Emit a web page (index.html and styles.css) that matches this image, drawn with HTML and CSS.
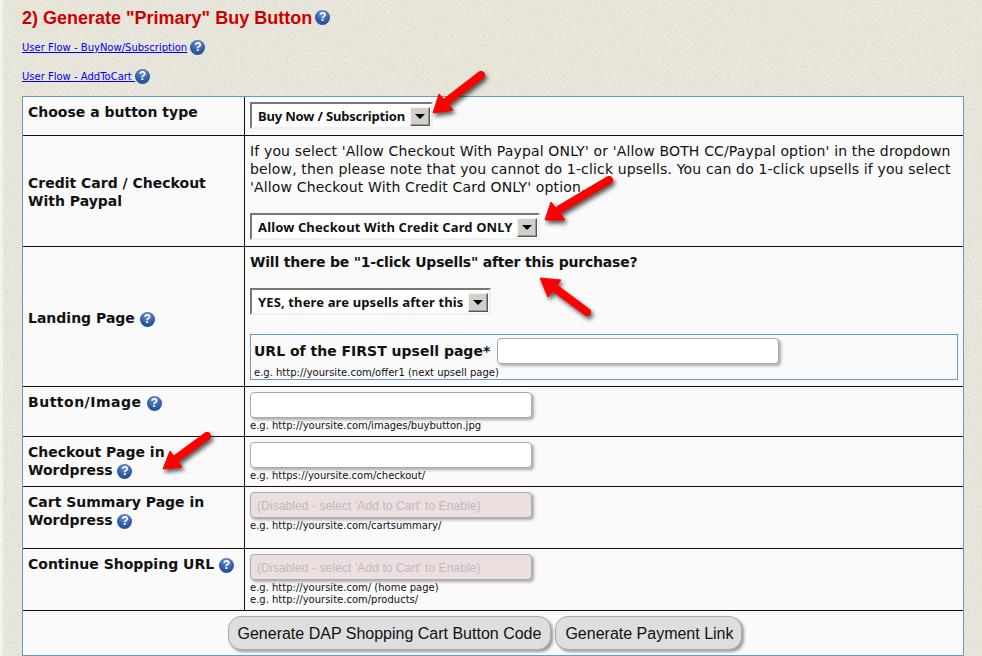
FILE: index.html
```html
<!DOCTYPE html>
<html lang="en">
<head>
<meta charset="utf-8">
<title>Generate Primary Buy Button</title>
<link rel="stylesheet" href="styles.css">
</head>
<body>
<svg class="grain" width="979" height="656" aria-hidden="true">
  <filter id="paper"><feTurbulence type="fractalNoise" baseFrequency="0.7" numOctaves="3" seed="4"/><feColorMatrix values="0 0 0 0 0.45  0 0 0 0 0.44  0 0 0 0 0.36  0.45 0 0 0 -0.17"/></filter>
  <rect width="979" height="656" filter="url(#paper)"/>
</svg>
<main class="page">
  <h2 class="title">2) Generate "Primary" Buy Button<span class="help help-title">?</span></h2>
  <p class="flow flow-first"><a href="#">User Flow - BuyNow/Subscription</a> <span class="help">?</span></p>
  <p class="flow"><a href="#">User Flow - AddToCart </a><span class="help">?</span></p>
  <table class="form">
    <tr class="r1">
      <td class="label">Choose a button type</td>
      <td class="field">
        <span class="drop drop-type"><select><option>Buy Now / Subscription</option></select><span class="drop-btn"></span></span>
      </td>
    </tr>
    <tr class="r2">
      <td class="label middle">Credit Card / Checkout With Paypal</td>
      <td class="field">
        <p class="note">If you select 'Allow Checkout With Paypal ONLY' or 'Allow BOTH CC/Paypal option' in the dropdown below, then please note that you cannot do 1-click upsells. You can do 1-click upsells if you select 'Allow Checkout With Credit Card ONLY' option.</p>
        <span class="drop drop-card"><select><option>Allow Checkout With Credit Card ONLY</option></select><span class="drop-btn"></span></span>
      </td>
    </tr>
    <tr class="r3">
      <td class="label middle">Landing Page <span class="help">?</span></td>
      <td class="field">
        <p class="question">Will there be "1-click Upsells" after this purchase?</p>
        <span class="drop drop-upsell"><select><option>YES, there are upsells after this</option></select><span class="drop-btn"></span></span>
        <div class="upsell">
          <div class="upsell-row"><b class="upsell-label">URL of the FIRST upsell page*</b><input class="text" type="text"></div>
          <div class="hint">e.g. http://yoursite.com/offer1 (next upsell page)</div>
        </div>
      </td>
    </tr>
    <tr class="r4">
      <td class="label wide">Button/Image <span class="help">?</span></td>
      <td class="field"><input class="text" type="text"><div class="hint">e.g. http://yoursite.com/images/buybutton.jpg</div></td>
    </tr>
    <tr class="r4">
      <td class="label">Checkout Page in<br>Wordpress <span class="help">?</span></td>
      <td class="field"><input class="text" type="text"><div class="hint">e.g. https://yoursite.com/checkout/</div></td>
    </tr>
    <tr class="r6">
      <td class="label">Cart Summary Page in<br>Wordpress <span class="help">?</span></td>
      <td class="field"><input class="text off" type="text" disabled placeholder="(Disabled - select 'Add to Cart' to Enable)"><div class="hint">e.g. http://yoursite.com/cartsummary/</div></td>
    </tr>
    <tr class="r6">
      <td class="label">Continue Shopping URL <span class="help">?</span></td>
      <td class="field"><input class="text off" type="text" disabled placeholder="(Disabled - select 'Add to Cart' to Enable)"><div class="hint">e.g. http://yoursite.com/ (home page)<br>e.g. http://yoursite.com/products/</div></td>
    </tr>
    <tr class="r8">
      <td class="actions" colspan="2"><button class="btn" type="button">Generate DAP Shopping Cart Button Code</button><button class="btn btn-pay" type="button">Generate Payment Link</button></td>
    </tr>
  </table>
</main>
<svg class="arrows" width="982" height="656" viewBox="0 0 982 656" aria-hidden="true">
  <g class="arrow"><path d="M481 75 L446 102"/><polygon points="433,113 439,94 453,110"/></g>
  <g class="arrow"><path d="M609 180 L560 209"/><polygon points="545,220 551,202 565,220"/></g>
  <g class="arrow"><path d="M587 312 L556 289"/><polygon points="540,278 561,280 548,297"/></g>
  <g class="arrow"><path d="M207 436 L177 458"/><polygon points="163,469 170,451 182,467"/></g>
</svg>
</body>
</html>
```
FILE: styles.css
```css
* { box-sizing: border-box; }
html, body { margin: 0; height: 656px; overflow: hidden; }
body { background: #f1f1ee; padding-left: 3px; position: relative; }
.grain { position: absolute; left: 3px; top: 0; background: #eae8dd; }
.page {
  position: relative;
  height: 656px;
  padding: 8px 0 0 19px;
  font-family: "DejaVu Sans", sans-serif;
  color: #111;
}
.title {
  margin: 0;
  font: bold 18px/20px "Liberation Sans", sans-serif;
  color: #cc0000;
}
.help {
  display: inline-block;
  width: 15px;
  height: 15px;
  border-radius: 50%;
  background: radial-gradient(circle at 50% 25%, #6d94cc, #2b5aa0 60%, #1e4688);
  color: #fff;
  font: bold 12px/15px "Liberation Sans", sans-serif;
  text-align: center;
  vertical-align: 0;
}
.help-title { margin-left: 3px; vertical-align: 3px; }
.flow {
  margin: 0;
  height: 29px;
  font: 10px/15px "DejaVu Sans", sans-serif;
}
.flow-first { margin-top: 12px; }
.flow a { color: #0000ee; }
.form {
  width: 942px;
  margin-top: -2px;
  table-layout: fixed;
  border-collapse: separate;
  border-spacing: 0;
  border: 1px solid #6699cc;
  background: #fafafa;
}
.form td { padding: 0; border-top: 1px solid #111; }
.form tr:first-child td { border-top: 0; }
.r1 { height: 38px; }
.r2 { height: 111px; }
.r3 { height: 140px; }
.r4 { height: 50px; }
.r6 { height: 62px; }
.r8 { height: 45px; }
.form td.label {
  width: 221px;
  padding: 6px 5px 0;
  vertical-align: top;
  font: bold 14px/18px "DejaVu Sans", sans-serif;
}
.form td.label.middle { vertical-align: middle; padding-top: 2px; }
.form td.label.wide { letter-spacing: 0.5px; }
.form td.field {
  padding: 5px 5px 0;
  border-left: 1px solid #111;
  vertical-align: top;
}
.form .r2 td.field, .form .r3 td.field { padding-top: 6px; }
.note {
  margin: 0 0 17px;
  max-width: 702px;
  font: 14px/18px "DejaVu Sans", sans-serif;
  letter-spacing: 0.15px;
}
.question {
  margin: 0 0 17px;
  font: bold 14px/18px "DejaVu Sans", sans-serif;
  letter-spacing: -0.2px;
}
.drop {
  position: relative;
  display: block;
  height: 27px;
}
.drop select {
  appearance: none;
  display: block;
  width: 100%;
  height: 27px;
  padding: 0 0 0 6px;
  border-style: solid;
  border-width: 2px;
  border-color: #777 #f0f0f0 #f0f0f0 #777;
  border-radius: 0;
  background: #fff;
  color: #111;
  font: 700 13px "Noto Sans", sans-serif;
  letter-spacing: 0.13px;
}
.drop-type { width: 183px; }
.drop-type select { letter-spacing: -0.17px; }
.drop-card { width: 290px; }
.drop-upsell { width: 241px; }
.drop-btn {
  position: absolute;
  top: 5px;
  right: 3px;
  width: 20px;
  height: 19px;
  background: #d4d0c8;
  border: 1px solid;
  border-color: #f4f4f0 #555 #555 #f4f4f0;
  box-shadow: inset -1px -1px 0 #999;
}
.drop-btn::after {
  content: "";
  position: absolute;
  left: 4px;
  top: 6px;
  border: 5px solid transparent;
  border-top-color: #000;
  border-bottom: 0;
}
.upsell {
  height: 46px;
  width: 708px;
  margin-top: 19px;
  padding: 3px 3px 0;
  border: 1px solid #6699cc;
}
.upsell .hint { margin-top: 3px; }
.upsell-row { display: flex; align-items: center; gap: 7px; }
.upsell-label { font: bold 14px/18px "DejaVu Sans", sans-serif; }
.text {
  display: block;
  width: 282px;
  height: 26px;
  padding: 0 6px;
  border: 1px solid #aaa;
  border-radius: 4px;
  background: #fff;
  box-shadow: 2px 2px 3px #aaa;
  outline: 0;
}
.off {
  padding-top: 1px;
  background: #ecdfdf;
  font: 12px "Liberation Sans", sans-serif;
  letter-spacing: 0.1px;
}
.off::placeholder { color: #bbb; opacity: 1; }
.hint {
  margin-top: 2px;
  font: 10px/12px "DejaVu Sans", sans-serif;
}
.form td.actions { text-align: center; vertical-align: top; padding: 5px 17px 0 0; }
.btn {
  height: 34px;
  margin: 0 2px;
  padding: 1px 9px 0;
  border: 1px solid #aaa;
  border-radius: 13px;
  background: #dedede;
  color: #111;
  font: 16px "Liberation Sans", sans-serif;
  box-shadow: 2px 2px 3px #999;
}
.btn-pay { padding-right: 7px; }
.arrows { position: absolute; left: 0; top: 0; pointer-events: none; }
.arrow { filter: drop-shadow(2px 3px 2px rgba(0,0,0,.65)); }
.arrow path { fill: none; stroke: #f00; stroke-width: 8; stroke-linecap: round; }
.arrow polygon { fill: #f00; stroke: #f00; stroke-width: 1; stroke-linejoin: round; }
```
